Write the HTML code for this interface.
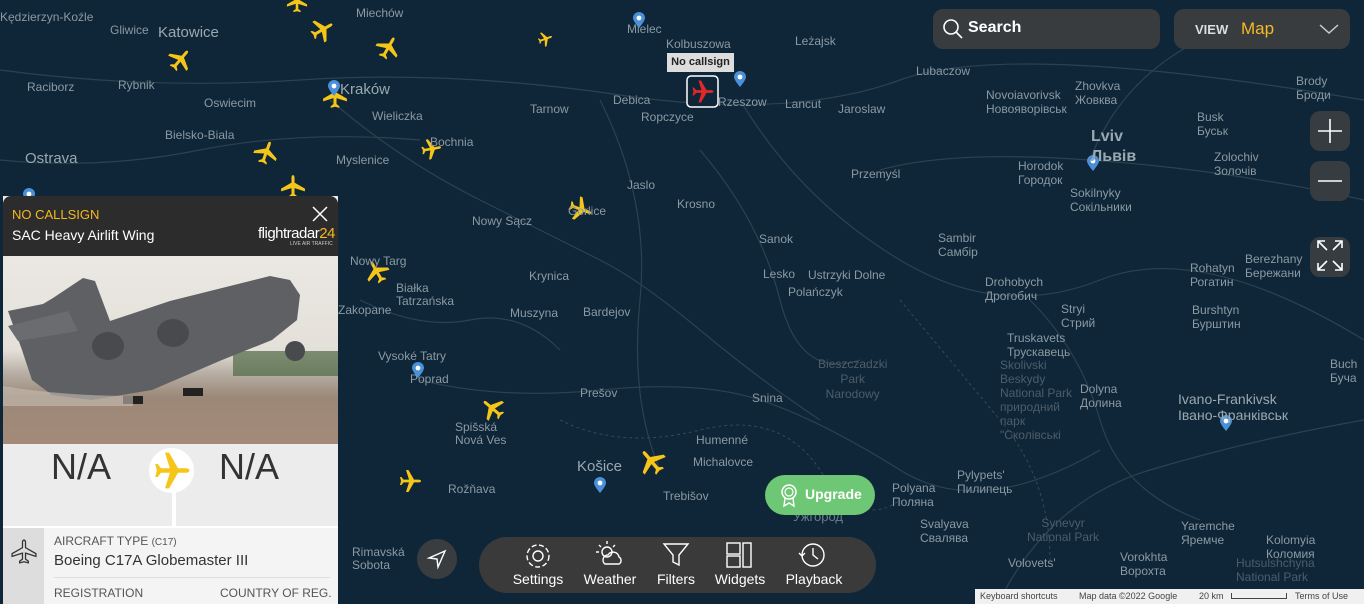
<!DOCTYPE html>
<html><head><meta charset="utf-8"><style>
*{margin:0;padding:0;box-sizing:border-box}
body{width:1364px;height:604px;overflow:hidden;background:#0f2638;font-family:"Liberation Sans","Noto Sans CJK SC",sans-serif;position:relative}
.l{position:absolute;color:#8b9aa3;font-size:12px;white-space:nowrap;line-height:14px}
.b{font-size:15px;color:#9aa8b0}
.panel{position:absolute;left:3px;top:196px;width:335px;height:408px;background:#ebebeb}
.tb{position:absolute;left:479px;top:537px;width:397px;height:56px;background:#3a3a3a;border-radius:28px;color:#fff}
.tb div{position:absolute;top:34px;font-size:14px;text-align:center}
.btn{position:absolute;background:#3a3d40;border-radius:10px;opacity:.95}
</style></head><body>
<svg width="1364" height="604" style="position:absolute;left:0;top:0">
<defs><symbol id="pl" viewBox="-12 -12 24 24"><path d="M0-11c1 0 1.4 1.2 1.4 2.5V-4L11 1.5V4L1.4 1V6.5L4 8.5V10L0 9-4 10V8.5L-1.4 6.5V1L-11 4V1.5L-1.4-4V-8.5C-1.4-9.8-1-11 0-11z" fill="#f5c518"/></symbol>
<symbol id="pn" viewBox="0 0 12 16"><path d="M6 16C6 16 0 9 0 6a6 6 0 0 1 12 0c0 3-6 10-6 10z" fill="#4a90d9"/><circle cx="6" cy="6" r="2.4" fill="#fff"/></symbol></defs>
<g stroke="#2b4250" stroke-width="1.2" fill="none">
<path d="M0 70 Q150 90 300 80 T620 95 T900 80 T1364 100"/>
<path d="M330 100 Q400 160 480 200 T600 260 T700 330 T820 420"/>
<path d="M0 160 Q100 170 200 150 T420 140"/>
<path d="M600 100 Q650 200 640 300 T660 470"/>
<path d="M740 100 Q800 200 900 260 T1100 280 T1364 340"/>
<path d="M880 170 Q950 150 1090 160 T1364 200"/>
<path d="M420 380 Q500 400 600 390 T760 400 T900 470 T1100 450"/>
<path d="M1030 300 Q1080 350 1100 420 T1200 520"/>
<path d="M360 300 Q420 330 470 320 T560 350"/>
<path d="M700 150 Q760 220 780 300 T860 360"/>
<path d="M1090 160 Q1120 80 1200 40"/>
<path d="M1000 600 Q1050 500 1150 470 T1364 420"/>
</g>
<g stroke="#33485a" stroke-width="1" stroke-dasharray="3 3" fill="none">
<path d="M560 420 Q620 450 700 430 T820 470 T900 500"/>
<path d="M900 300 Q950 360 1000 420 T1050 560"/>
</g>
<g transform="rotate(40 180 60)"><use href="#pl" x="167" y="47" width="26" height="26"/></g>
<g transform="rotate(60 322 30)"><use href="#pl" x="309" y="17" width="26" height="26"/></g>
<g transform="rotate(30 388 48)"><use href="#pl" x="375" y="35" width="26" height="26"/></g>
<use href="#pl" x="286" y="-8" width="22" height="22"/>
<g transform="rotate(70 545 39)"><use href="#pl" x="537" y="31" width="16" height="16"/></g>
<use href="#pl" x="322" y="84" width="26" height="26"/>
<g transform="rotate(20 266 153)"><use href="#pl" x="253" y="140" width="26" height="26"/></g>
<g transform="rotate(80 431 149)"><use href="#pl" x="420" y="138" width="22" height="22"/></g>
<use href="#pl" x="280" y="174" width="26" height="26"/>
<g transform="rotate(110 580 209)"><use href="#pl" x="567" y="196" width="26" height="26"/></g>
<g transform="rotate(-30 377 272)"><use href="#pl" x="364" y="259" width="26" height="26"/></g>
<g transform="rotate(-50 493 409)"><use href="#pl" x="480" y="396" width="26" height="26"/></g>
<g transform="rotate(-40 652 462)"><use href="#pl" x="637" y="447" width="30" height="30"/></g>
<g transform="rotate(90 410 481)"><use href="#pl" x="398" y="469" width="24" height="24"/></g>
<use href="#pn" x="633" y="12" width="12" height="16"/>
<use href="#pn" x="328" y="80" width="12" height="16"/>
<use href="#pn" x="734" y="71" width="12" height="16"/>
<use href="#pn" x="1087" y="155" width="12" height="16"/>
<use href="#pn" x="412" y="362" width="12" height="16"/>
<use href="#pn" x="594" y="477" width="12" height="16"/>
<use href="#pn" x="1220" y="415" width="12" height="16"/>
<use href="#pn" x="23" y="188" width="12" height="16"/>
<rect x="687" y="76" width="31" height="31" rx="4" fill="#0f2638" stroke="#fff" stroke-width="1.5"/>
<g transform="translate(702.5 91.5) rotate(90)"><path d="M0-11c1 0 1.4 1.2 1.4 2.5V-4L11 1.5V4L1.4 1V6.5L4 8.5V10L0 9-4 10V8.5L-1.4 6.5V1L-11 4V1.5L-1.4-4V-8.5C-1.4-9.8-1-11 0-11z" fill="#e02828"/></g>
</svg>
<div style="position:absolute;left:667px;top:53px;width:67px;height:19px;background:#ddd;color:#222;font-size:11px;font-weight:bold;text-align:center;line-height:19px">No callsign</div>

<div class="l" style="left:0;top:10px">Kędzierzyn-Koźle</div>
<div class="l" style="left:110px;top:23px">Gliwice</div>
<div class="l b" style="left:158px;top:26px">Katowice</div>
<div class="l" style="left:356px;top:6px">Miechów</div>
<div class="l" style="left:27px;top:80px">Raciborz</div>
<div class="l" style="left:118px;top:78px">Rybnik</div>
<div class="l" style="left:204px;top:96px">Oswiecim</div>
<div class="l b" style="left:340px;top:83px">Kraków</div>
<div class="l" style="left:372px;top:109px">Wieliczka</div>
<div class="l" style="left:430px;top:135px">Bochnia</div>
<div class="l b" style="left:25px;top:152px">Ostrava</div>
<div class="l" style="left:165px;top:128px">Bielsko-Biala</div>
<div class="l" style="left:336px;top:153px">Myslenice</div>
<div class="l" style="left:530px;top:102px">Tarnow</div>
<div class="l" style="left:627px;top:22px">Mielec</div>
<div class="l" style="left:666px;top:37px">Kolbuszowa</div>
<div class="l" style="left:613px;top:93px">Debica</div>
<div class="l" style="left:641px;top:110px">Ropczyce</div>
<div class="l" style="left:718px;top:95px">Rzeszow</div>
<div class="l" style="left:785px;top:97px">Lancut</div>
<div class="l" style="left:795px;top:34px">Leżajsk</div>
<div class="l" style="left:838px;top:102px">Jaroslaw</div>
<div class="l" style="left:916px;top:64px">Lubaczow</div>
<div class="l" style="left:627px;top:178px">Jaslo</div>
<div class="l" style="left:677px;top:197px">Krosno</div>
<div class="l" style="left:472px;top:214px">Nowy Sącz</div>
<div class="l" style="left:568px;top:204px">Gorlice</div>
<div class="l" style="left:851px;top:167px">Przemyśl</div>
<div class="l" style="left:759px;top:232px">Sanok</div>
<div class="l" style="left:763px;top:267px">Lesko</div>
<div class="l" style="left:808px;top:268px">Ustrzyki Dolne</div>
<div class="l" style="left:788px;top:285px">Polańczyk</div>
<div class="l" style="left:529px;top:269px">Krynica</div>
<div class="l" style="left:510px;top:306px">Muszyna</div>
<div class="l" style="left:583px;top:305px">Bardejov</div>
<div class="l" style="left:350px;top:254px">Nowy Targ</div>
<div class="l" style="left:396px;top:282px;line-height:13px">Białka<br>Tatrzańska</div>
<div class="l" style="left:338px;top:303px">Zakopane</div>
<div class="l" style="left:378px;top:349px">Vysoké Tatry</div>
<div class="l" style="left:410px;top:372px">Poprad</div>
<div class="l" style="left:580px;top:386px">Prešov</div>
<div class="l" style="left:455px;top:421px;line-height:13px">Spišská<br>Nová Ves</div>
<div class="l" style="left:696px;top:433px">Humenné</div>
<div class="l" style="left:752px;top:391px">Snina</div>
<div class="l b" style="left:577px;top:460px">Košice</div>
<div class="l" style="left:693px;top:455px">Michalovce</div>
<div class="l" style="left:448px;top:482px">Rožňava</div>
<div class="l" style="left:663px;top:489px">Trebišov</div>
<div class="l" style="left:352px;top:546px;line-height:13px">Rimavská<br>Sobota</div>
<div class="l" style="left:818px;top:357px;color:#4d5d6a;text-align:center;line-height:15px">Bieszczadzki<br>Park<br>Narodowy</div>
<div class="l" style="left:793px;top:510px;color:#6e7e88;font-size:13px">Ужгород</div>
<div class="l" style="left:892px;top:481px;line-height:14px">Polyana<br>Поляна</div>
<div class="l" style="left:920px;top:517px;line-height:14px">Svalyava<br>Свалява</div>
<div class="l" style="left:957px;top:468px;line-height:14px">Pylypets'<br>Пилипець</div>
<div class="l" style="left:1027px;top:516px;color:#4d5d6a;text-align:center;line-height:14px">Synevyr<br>National Park</div>
<div class="l" style="left:1181px;top:519px;line-height:14px">Yaremche<br>Яремче</div>
<div class="l" style="left:1266px;top:533px;line-height:14px">Kolomyia<br>Коломия</div>
<div class="l" style="left:1120px;top:550px;line-height:14px">Vorokhta<br>Ворохта</div>
<div class="l" style="left:1236px;top:556px;color:#4d5d6a;line-height:14px">Hutsulshchyna<br>National Park</div>
<div class="l" style="left:1008px;top:556px;line-height:14px">Volovets'</div>
<div class="l" style="left:986px;top:88px;line-height:14px">Novoiavorivsk<br>Новояворівськ</div>
<div class="l" style="left:1018px;top:159px;line-height:14px">Horodok<br>Городок</div>
<div class="l b" style="left:1091px;top:127px;font-size:16px;line-height:20px;font-weight:bold">Lviv<br>Львів</div>
<div class="l" style="left:1070px;top:186px;line-height:14px">Sokilnyky<br>Сокільники</div>
<div class="l" style="left:1075px;top:79px;line-height:14px">Zhovkva<br>Жовква</div>
<div class="l" style="left:1197px;top:110px;line-height:14px">Busk<br>Буськ</div>
<div class="l" style="left:1214px;top:150px;line-height:14px">Zolochiv<br>Золочів</div>
<div class="l" style="left:1296px;top:74px;line-height:14px">Brody<br>Броди</div>
<div class="l" style="left:938px;top:231px;line-height:14px">Sambir<br>Самбір</div>
<div class="l" style="left:985px;top:275px;line-height:14px">Drohobych<br>Дрогобич</div>
<div class="l" style="left:1061px;top:302px;line-height:14px">Stryi<br>Стрий</div>
<div class="l" style="left:1007px;top:331px;line-height:14px">Truskavets<br>Трускавець</div>
<div class="l" style="left:1000px;top:358px;color:#4d5d6a;line-height:14px">Skolivski<br>Beskydy<br>National Park<br>природний<br>парк<br>"Сколівські</div>
<div class="l" style="left:1190px;top:261px;line-height:14px">Rohatyn<br>Рогатин</div>
<div class="l" style="left:1245px;top:252px;line-height:14px">Berezhany<br>Бережани</div>
<div class="l" style="left:1192px;top:303px;line-height:14px">Burshtyn<br>Бурштин</div>
<div class="l" style="left:1080px;top:382px;line-height:14px">Dolyna<br>Долина</div>
<div class="l b" style="left:1178px;top:391px;font-size:14px;line-height:16px">Ivano-Frankivsk<br>Івано-Франківськ</div>
<div class="l" style="left:1330px;top:357px;line-height:14px">Buch<br>Буча</div>

<div class="btn" style="left:933px;top:9px;width:227px;height:40px;background:#3b3d3f"></div>
<svg style="position:absolute;left:941px;top:17px" width="24" height="24"><circle cx="10" cy="10" r="7" stroke="#fff" stroke-width="1.6" fill="none"/><path d="M15 15l6 6" stroke="#fff" stroke-width="1.6"/></svg>
<div style="position:absolute;left:968px;top:19px;color:#fff;font-weight:bold;font-size:16px">Search</div>
<div class="btn" style="left:1174px;top:9px;width:176px;height:40px;background:#3b3d3f"></div>
<div style="position:absolute;left:1195px;top:22px;color:#ddd;font-weight:bold;font-size:13px">VIEW</div>
<div style="position:absolute;left:1241px;top:19px;color:#f5b921;font-size:17px">Map</div>
<svg style="position:absolute;left:1318px;top:22px" width="22" height="14"><path d="M2 3l9 8 9-8" stroke="#ccc" stroke-width="1.5" fill="none"/></svg>
<div class="btn" style="left:1310px;top:111px;width:40px;height:40px"></div>
<div class="btn" style="left:1310px;top:161px;width:40px;height:40px"></div>
<div class="btn" style="left:1310px;top:237px;width:40px;height:40px"></div>
<svg style="position:absolute;left:1310px;top:111px" width="40" height="170"><path d="M8 20h24M20 8v24M8 70h24" stroke="#fff" stroke-width="1.6"/><g stroke="#fff" stroke-width="1.6" fill="none"><path d="M8 137v-7h7M8 130l9 9M32 137v-7h-7M32 130l-9 9M8 152v7h7M8 159l9-9M32 152v7h-7M32 159l-9-9"/></g></svg>

<div class="panel">
<div style="position:absolute;left:0;top:0;width:335px;height:60px;background:#2c2c2c;border-radius:8px 8px 0 0"></div>
<div style="position:absolute;left:9px;top:11px;color:#f5b921;font-size:13px">NO CALLSIGN</div>
<div style="position:absolute;left:9px;top:31px;color:#fff;font-size:14px">SAC Heavy Airlift Wing</div>
<svg style="position:absolute;left:308px;top:9px" width="18" height="18"><path d="M2 2l14 14M16 2L2 16" stroke="#fff" stroke-width="1.5"/></svg>
<div style="position:absolute;left:255px;top:29px;color:#fff;font-size:15px;letter-spacing:-0.5px">flightradar<span style="color:#f5b921">24</span></div>
<div style="position:absolute;left:287px;top:45px;color:#ccc;font-size:5px">LIVE AIR TRAFFIC</div>
<div style="position:absolute;left:0;top:60px;width:335px;height:188px;background:linear-gradient(#ebe8e3 0,#e4e0d9 50%,#b8b0a6 62%,#9c8878 75%,#a48a78 100%)"></div>
<svg style="position:absolute;left:0;top:60px" width="335" height="188">
<path d="M230 95h105v25h-105z" fill="#4f6a45" opacity=".7"/>
<path d="M5 55l35-7 10-6 30-20 12 3 15 40 60-20 60-15 40-10 20 4 10 15-3 25-25 20-50 20-70 30-60 10-40-5-20-15-10-30z" fill="#5e6064"/>
<path d="M5 70l60-15 10 20-60 10z" fill="#6a6c70"/>
<ellipse cx="105" cy="90" rx="16" ry="14" fill="#484a4e"/><ellipse cx="170" cy="77" rx="16" ry="14" fill="#484a4e"/><ellipse cx="292" cy="95" rx="10" ry="10" fill="#484a4e"/>
<path d="M120 140h20v8h-20zM180 132h20v8h-20z" fill="#222"/>
<path d="M0 130q60 10 130 10v10h-130z" fill="#c7beb3" opacity=".6"/>
</svg>
<div style="position:absolute;left:0;top:248px;width:335px;height:82px;background:#ececec"></div>
<div style="position:absolute;left:169px;top:255px;width:4px;height:75px;background:#fff"></div>
<div style="position:absolute;left:48px;top:250px;font-size:36px;color:#333">N/A</div>
<div style="position:absolute;left:216px;top:250px;font-size:36px;color:#333">N/A</div>
<div style="position:absolute;left:146px;top:252px;width:45px;height:45px;border-radius:50%;background:#fff"></div>
<svg style="position:absolute;left:149px;top:255px" width="39" height="39" viewBox="-12 -12 24 24"><g transform="rotate(90)"><path d="M0-11c1 0 1.4 1.2 1.4 2.5V-4L11 1.5V4L1.4 1V6.5L4 8.5V10L0 9-4 10V8.5L-1.4 6.5V1L-11 4V1.5L-1.4-4V-8.5C-1.4-9.8-1-11 0-11z" fill="#f5c518"/></g></svg>
<div style="position:absolute;left:0;top:330px;width:335px;height:78px;background:#f4f4f4;border-top:2px solid #fff"></div>
<div style="position:absolute;left:0;top:332px;width:41px;height:76px;background:#ddd"></div>
<svg style="position:absolute;left:8px;top:343px" width="26" height="26" viewBox="-12 -12 24 24"><path d="M0-11c1 0 1.4 1.2 1.4 2.5V-4L11 1.5V4L1.4 1V6.5L4 8.5V10L0 9-4 10V8.5L-1.4 6.5V1L-11 4V1.5L-1.4-4V-8.5C-1.4-9.8-1-11 0-11z" fill="none" stroke="#333" stroke-width="1.2"/></svg>
<div style="position:absolute;left:51px;top:338px;font-size:12px;color:#555">AIRCRAFT TYPE <span style="font-size:10px">(C17)</span></div>
<div style="position:absolute;left:51px;top:356px;font-size:15px;color:#333">Boeing C17A Globemaster III</div>
<div style="position:absolute;left:51px;top:381px;width:276px;height:1px;background:#ddd"></div>
<div style="position:absolute;left:51px;top:390px;font-size:12px;color:#555">REGISTRATION</div>
<div style="position:absolute;left:217px;top:390px;font-size:12px;color:#555">COUNTRY OF REG.</div>
</div>

<div style="position:absolute;left:417px;top:539px;width:40px;height:40px;border-radius:50%;background:#3a3d40"></div>
<svg style="position:absolute;left:425px;top:547px" width="24" height="24"><path d="M20 4L4 11l8 1 1 8z" stroke="#fff" stroke-width="1.4" fill="none"/></svg>

<div style="position:absolute;left:765px;top:475px;width:110px;height:40px;border-radius:20px;background:#6ec775"></div>
<svg style="position:absolute;left:777px;top:482px" width="24" height="26"><circle cx="12" cy="10" r="7" stroke="#fff" stroke-width="1.5" fill="none"/><circle cx="12" cy="10" r="4" stroke="#fff" stroke-width="1.2" fill="none"/><path d="M8 16l-1 8 5-3 5 3-1-8" stroke="#fff" stroke-width="1.4" fill="none"/></svg>
<div style="position:absolute;left:805px;top:486px;color:#fff;font-weight:bold;font-size:14px">Upgrade</div>

<div class="tb">
<svg style="position:absolute;left:0;top:0" width="397" height="34" fill="none" stroke="#fff" stroke-width="1.4">
<circle cx="59" cy="19" r="5"/><circle cx="59" cy="19" r="11" stroke-dasharray="5 2.5"/>
<circle cx="128" cy="15" r="5"/><path d="M120 8l2 2M128 4v3M136 8l-2 2M117 15h3"/><path d="M126 27a5 5 0 0 1 3-9 6 6 0 0 1 11 2 4 4 0 0 1 0 7z"/>
<path d="M185 7h24l-9 11v10l-6-3v-7z"/>
<rect x="248" y="6" width="13" height="11"/><rect x="248" y="19" width="13" height="11"/><rect x="264" y="6" width="8" height="24"/>
<circle cx="334" cy="18" r="11"/><path d="M334 11v7l5 4M320 16l3 3 3-3"/>
</svg>
<div style="left:33px;width:52px">Settings</div>
<div style="left:103px;width:56px">Weather</div>
<div style="left:175px;width:44px">Filters</div>
<div style="left:233px;width:56px">Widgets</div>
<div style="left:303px;width:64px">Playback</div>
</div>

<div style="position:absolute;left:975px;top:589px;width:389px;height:15px;background:#f0f0f0;font-size:9px;color:#444;line-height:15px;white-space:nowrap">
<span style="position:absolute;left:5px">Keyboard shortcuts</span><span style="position:absolute;left:104px">Map data ©2022 Google</span><span style="position:absolute;left:224px">20 km</span><span style="position:absolute;left:256px;top:4px;width:56px;height:6px;border:1px solid #444;border-top:none"></span><span style="position:absolute;left:320px">Terms of Use</span></div>
</body></html>
